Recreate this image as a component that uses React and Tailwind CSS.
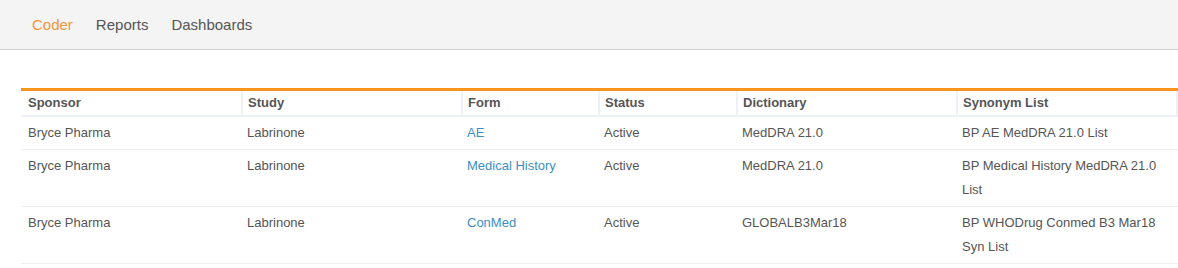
const rows = [
  { sponsor: "Bryce Pharma", study: "Labrinone", form: "AE", status: "Active", dict: "MedDRA 21.0", syn: "BP AE MedDRA 21.0 List" },
  { sponsor: "Bryce Pharma", study: "Labrinone", form: "Medical History", status: "Active", dict: "MedDRA 21.0", syn: "BP Medical History MedDRA 21.0 List" },
  { sponsor: "Bryce Pharma", study: "Labrinone", form: "ConMed", status: "Active", dict: "GLOBALB3Mar18", syn: "BP WHODrug Conmed B3 Mar18 Syn List" },
];

const cols = ["Sponsor", "Study", "Form", "Status", "Dictionary", "Synonym List", ""];
const widths = ["w-[221px]", "w-[220px]", "w-[137px]", "w-[138px]", "w-[220px]", "w-[220px]", "w-[200px]"];

export default function App() {
  return (
    <div className="min-h-[268px] bg-white overflow-hidden text-[#555]" style={{ fontFamily: '"Liberation Sans", Arial, sans-serif' }}>
      <nav className="h-[50px] bg-[#f4f4f4] border-b border-[#d0d0d0] flex items-center pl-[32px] pt-[2px] gap-[23px] text-[15px]">
        <a className="text-[#f7943c]">Coder</a>
        <a className="text-[#555]">Reports</a>
        <a className="text-[#555]">Dashboards</a>
      </nav>
      <div className="pt-[38px] pl-[21px]">
        <table className="table-fixed border-collapse w-[1356px] text-[13px] border-t-[3px] border-[#f7941d]">
          <thead>
            <tr className="border-b-2 border-[#edf1f5]">
              {cols.map((c, i) => (
                <th
                  key={i}
                  className={`${widths[i]} h-[26px] text-left font-bold text-[#555] border-r-2 border-[#edf1f5] ${i === 0 ? "pl-[7px]" : "pl-[5px]"}`}
                >
                  {c}
                </th>
              ))}
            </tr>
          </thead>
          <tbody>
            {rows.map((r, i) => (
              <tr key={i} className="border-b border-[#eeeeee] align-top leading-[24px]">
                <td className="pl-[7px] pt-[4px] pb-[4px]">{r.sponsor}</td>
                <td className="pl-[5px] pt-[4px] pb-[4px]">{r.study}</td>
                <td className="pl-[5px] pt-[4px] pb-[4px] text-[#3a8fc4]">{r.form}</td>
                <td className="pl-[5px] pt-[4px] pb-[4px]">{r.status}</td>
                <td className="pl-[5px] pt-[4px] pb-[4px]">{r.dict}</td>
                <td className="pl-[5px] pr-[8px] pt-[4px] pb-[4px]">{r.syn}</td>
                <td></td>
              </tr>
            ))}
          </tbody>
        </table>
      </div>
    </div>
  );
}
